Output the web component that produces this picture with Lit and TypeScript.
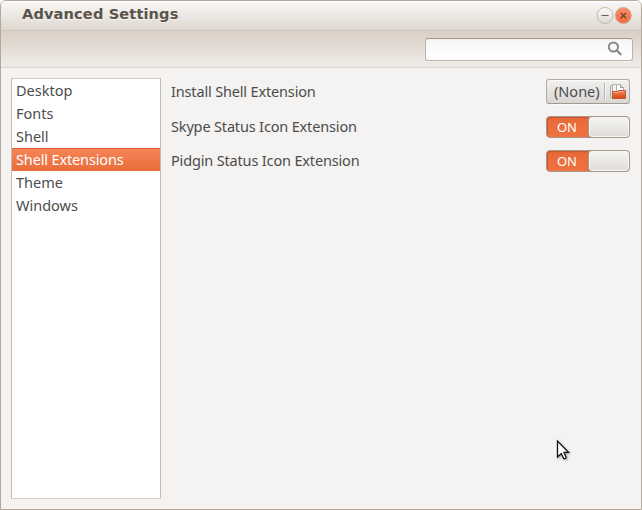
import { LitElement, html, css } from "lit";
import { customElement, state } from "lit/decorators.js";
import { classMap } from "lit/directives/class-map.js";

@customElement("toggle-switch")
class ToggleSwitch extends LitElement {
  static styles = css`
    :host { display: block; }
    .switch {
      box-sizing: border-box; display: flex; width: 84px; height: 22px;
      border: 1px solid #a5978a; border-radius: 4px; overflow: hidden;
      background: #ec6c3b;
    }
    .on {
      flex: 1; box-sizing: border-box; padding-left: 10px;
      font: 13px/20px "Noto Sans", sans-serif; color: #fff; letter-spacing: -0.1px;
      background: linear-gradient(#dd6032, #e96a39 3px, #ee7342);
      box-shadow: inset 1px 1px 0 #c9572d; border-radius: 3px 0 0 3px;
    }
    .knob {
      box-sizing: border-box; width: 42px; margin: -1px -1px -1px 0;
      border: 1px solid #a5978a; border-radius: 4px;
      background: linear-gradient(#f6f5f3, #dfdcd7); box-shadow: inset 0 0 0 1px #f8f7f5;
    }
  `;
  render() {
    return html`<div class="switch"><span class="on">ON</span><span class="knob"></span></div>`;
  }
}

@customElement("file-button")
class FileButton extends LitElement {
  static styles = css`
    :host { display: block; }
    .button {
      box-sizing: border-box; display: flex; align-items: center; width: 84px; height: 25px;
      border: 1px solid #b3aaa2; border-bottom-color: #a29991; border-radius: 3px;
      background: linear-gradient(#f2f1f0, #d9d7d4); box-shadow: inset 0 1px #fbfbfa, 0 1px #faf9f8;
      padding-left: 7px; color: #4c4c4c;
      font: 14.5px/23px "Noto Sans", sans-serif;
    }
    .label { width: 50px; white-space: nowrap; }
    .rule { width: 1px; height: 17px; background: #b8b4b0; box-shadow: 1px 0 #f7f6f5; }
    svg { display: block; margin: -1px 0 0 5px; }
  `;
  render() {
    return html`<div class="button">
      <span class="label">(None)</span><span class="rule"></span>
      <svg width="17" height="17" viewBox="0 0 17 17">
        <defs><linearGradient id="f" x2="0" y2="1"><stop stop-color="#f38a5e" /><stop offset="1" stop-color="#d2460f" /></linearGradient></defs>
        <path d="M.5 14.500V3.500Q.5 2.500 1.500 2.500H5.500V14.500Z" fill="#eceae8" stroke="#aaa6a2" />
        <path d="M2.500 10V1.500H7.500L10.500 4.500V10Z" fill="#f5f4f2" stroke="#b3afab" />
        <path d="M6.500 10V1.500H10.500L13.500 4.500V10Z" fill="#fcfcfb" stroke="#b3afab" />
        <path d="M10.500 1.500V4.500H13.500" fill="#e3e1de" stroke="#a19c98" />
        <path d="M2.500 15.500V8.500H7.500L8.500 7.500H15.500V15.500Z" fill="url(#f)" stroke="#c9562b" />
        <path d="M3.500 9.500H8.500L9.500 8.500H14.500" stroke="#f9ab8a" fill="none" />
      </svg>
    </div>`;
  }
}

@customElement("app-root")
class AppRoot extends LitElement {
  @state() selected = "Shell Extensions";

  static styles = css`
    :host { display: block; width: 642px; height: 510px; position: relative; }
    .window {
      box-sizing: border-box; width: 642px; height: 510px; display: flex; flex-direction: column;
      border: 1px solid #b5a79a; border-radius: 6px 6px 0 0; overflow: hidden;
      background: #f4f3f1; color: #4c4c4c; font: 14.5px/23px "Noto Sans", sans-serif;
    }
    .titlebar {
      box-sizing: border-box; height: 29px; flex: none; display: flex; justify-content: space-between;
      padding: 0 9px 0 21px; background: linear-gradient(#f9f8f6, #ded7d0);
      box-shadow: inset 0 1px #fefefd;
    }
    .title { font: bold 14.6px/26px "DejaVu Sans", sans-serif; letter-spacing: 0.12px; color: #5a534a; text-shadow: 0 1px #f6f3f0; }
    .buttons { display: flex; padding-top: 5px; }
    .buttons svg { display: block; }
    .toolbar {
      box-sizing: border-box; height: 38px; flex: none; display: flex; justify-content: flex-end;
      padding: 7px 8px 0 0; border-top: 1px solid #d2c7bd; border-bottom: 1px solid #ddd6ce;
      background: linear-gradient(#dacfc5, #efece8);
    }
    .search {
      box-sizing: border-box; width: 208px; height: 23px; display: flex; justify-content: flex-end;
      padding: 2px 9px 0 0; border: 1px solid #beb2a7; border-top-color: #a4988e; border-radius: 3px;
      background: linear-gradient(#eeedec, #f7f7f7 2px, #fff); box-shadow: 0 1px #f4f1ee;
    }
    .body { flex: 1; display: flex; padding: 10px 11px 10px 10px; }
    .list {
      box-sizing: border-box; width: 150px; height: 421px; background: #fff;
      border: 1px solid #c6bcb0; border-top-color: #d3cac0; border-bottom-color: #d8d0c6;
    }
    .item { box-sizing: border-box; height: 23px; padding-left: 4px; white-space: nowrap; cursor: default; }
    .item.selected {
      color: #fff; background: linear-gradient(#f58557, #e96d3b); box-shadow: inset 0 1px #e0622f;
      letter-spacing: -0.14px;
    }
    .panel { flex: 1; display: flex; flex-direction: column; padding: 1px 0 0 10px; }
    .row { display: flex; height: 25px; justify-content: space-between; align-items: center; margin-bottom: 12px; }
    .row + .row { height: 22px; }
    .name { white-space: nowrap; letter-spacing: -0.16px; }
    .row + .row .name { margin-top: -2px; }
    .cursor { position: absolute; left: 556px; top: 439px; filter: drop-shadow(1px 1px 1px #0005); }
  `;

  render() {
    const items = ["Desktop", "Fonts", "Shell", "Shell Extensions", "Theme", "Windows"];
    return html`
      <div class="window">
        <header class="titlebar">
          <span class="title">Advanced Settings</span>
          <div class="buttons">
            <svg width="18" height="18" viewBox="0 0 18 18">
              <defs><linearGradient id="m" x2="0" y2="1"><stop stop-color="#fdfcfb" /><stop offset="1" stop-color="#dbd6d0" /></linearGradient></defs>
              <circle cx="9" cy="9.500" r="8" fill="url(#m)" stroke="#c2b9b0" />
              <path d="M5.500 9.500H12.500" stroke="#665f58" />
            </svg>
            <svg width="18" height="18" viewBox="0 0 18 18">
              <defs><linearGradient id="c" x2="0" y2="1"><stop stop-color="#f99069" /><stop offset="1" stop-color="#f0693a" /></linearGradient></defs>
              <circle cx="9.300" cy="9.500" r="8" fill="url(#c)" stroke="#cbb0a4" />
              <path d="M6.700 6.900L12.100 12.300M12.100 6.900L6.700 12.300" stroke="#69422f" stroke-width="1.300" />
            </svg>
          </div>
        </header>
        <div class="toolbar">
          <div class="search">
            <svg width="16" height="16" viewBox="0 0 16 16" fill="none" stroke="#888">
              <circle cx="6.400" cy="6" r="4.600" stroke-width="2" />
              <path d="M9.900 9.500L13.600 13.200" stroke-width="2.300" stroke-linecap="round" />
            </svg>
          </div>
        </div>
        <main class="body">
          <nav class="list">
            ${items.map((t) => html`<div class=${classMap({ item: true, selected: t === this.selected })} @click=${() => (this.selected = t)}>${t}</div>`)}
          </nav>
          <section class="panel">
            <div class="row"><span class="name">Install Shell Extension</span><file-button></file-button></div>
            <div class="row"><span class="name">Skype Status Icon Extension</span><toggle-switch></toggle-switch></div>
            <div class="row"><span class="name">Pidgin Status Icon Extension</span><toggle-switch></toggle-switch></div>
          </section>
        </main>
      </div>
      <svg class="cursor" width="15" height="22" viewBox="0 0 15 22">
        <path d="M1.500 2V18L5.300 14.500L7.700 19.500Q9 20.300 10.200 18.600L8 13.400H12.500Z" fill="#fff" stroke="#111" stroke-width="1.300" />
      </svg>`;
  }
}
